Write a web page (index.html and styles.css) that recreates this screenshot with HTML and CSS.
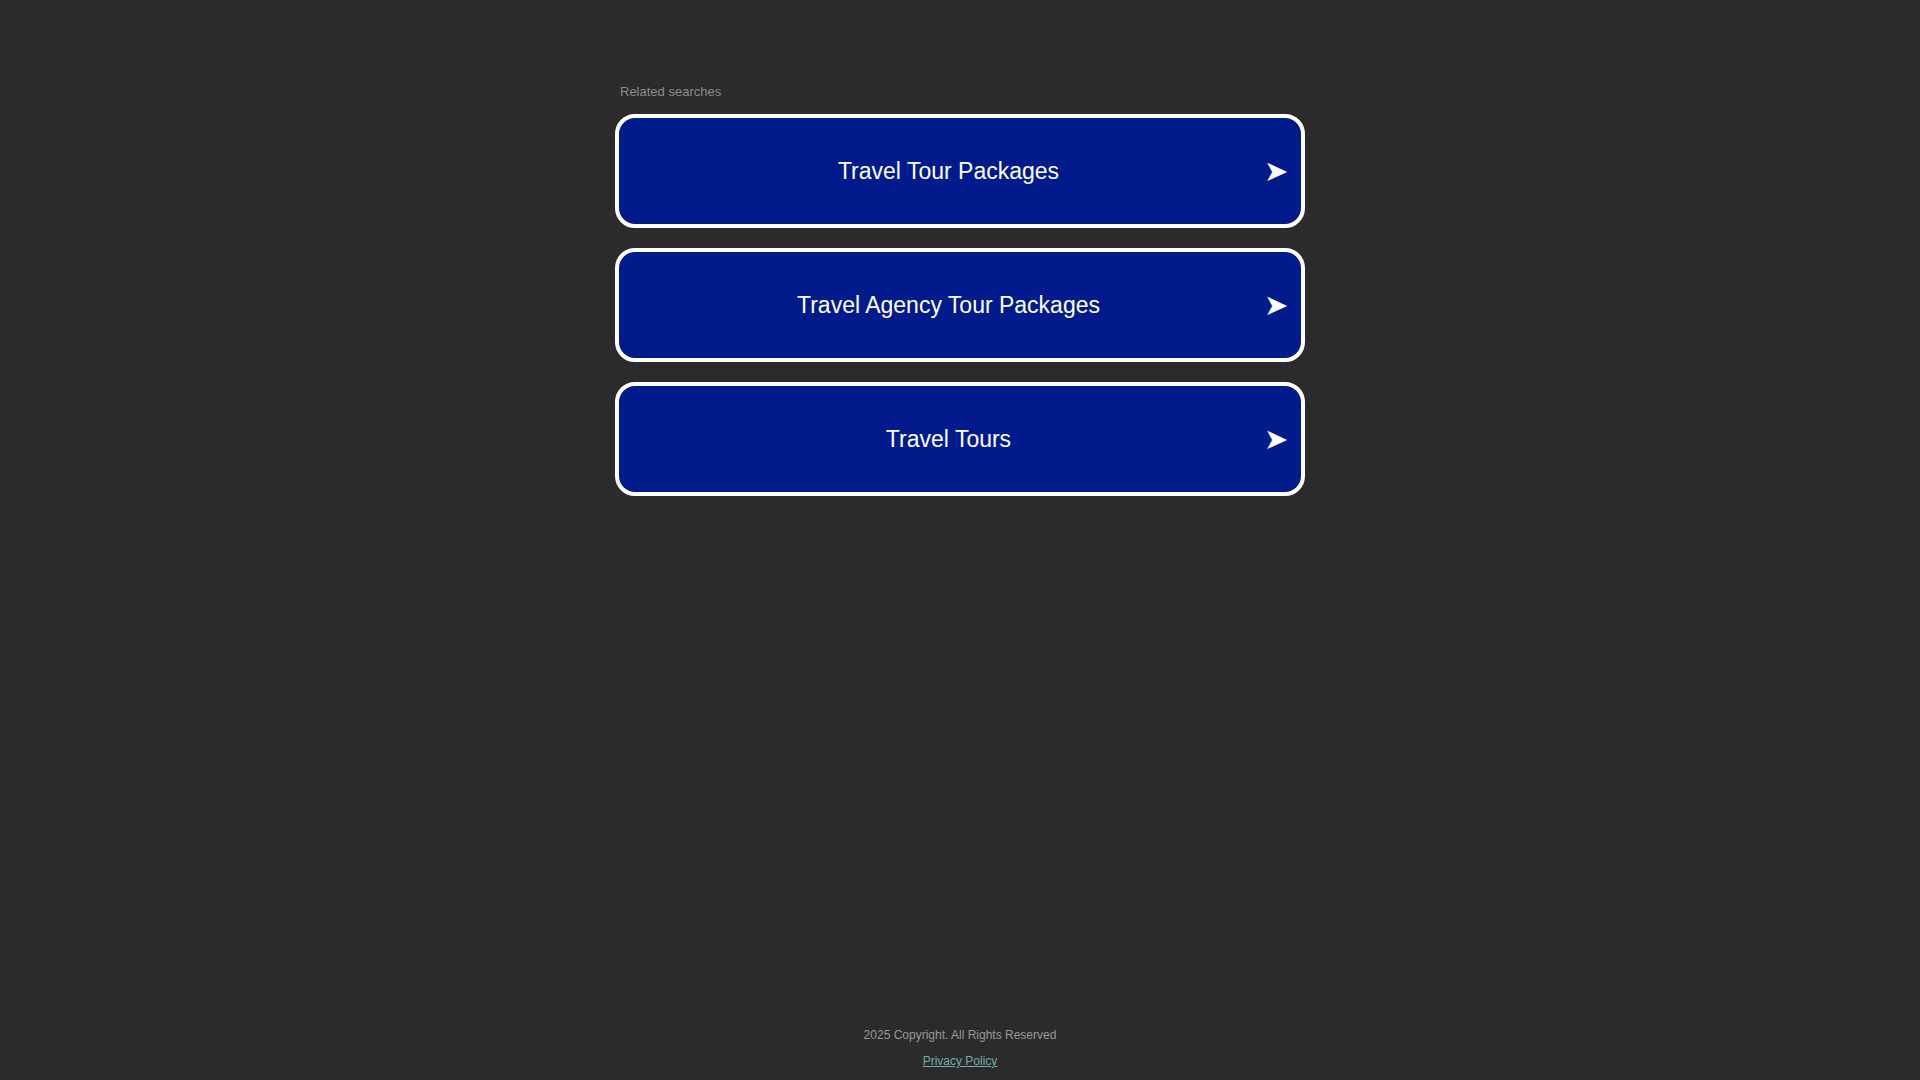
FILE: index.html
```html
<!DOCTYPE html>
<html lang="en">
<head>
<meta charset="utf-8">
<title>Related searches</title>
<link rel="stylesheet" href="styles.css">
</head>
<body>
<main class="content">
  <div class="heading">Related searches</div>
  <ul class="links">
    <li><a class="link" href="#"><span class="label">Travel Tour Packages</span><span class="arrow">➤</span></a></li>
    <li><a class="link" href="#"><span class="label">Travel Agency Tour Packages</span><span class="arrow">➤</span></a></li>
    <li><a class="link" href="#"><span class="label">Travel Tours</span><span class="arrow">➤</span></a></li>
  </ul>
</main>
<footer class="footer">
  <div class="copyright">2025 Copyright. All Rights Reserved</div>
  <a class="privacy" href="#">Privacy Policy</a>
</footer>
</body>
</html>
```
FILE: styles.css
```css
html, body {
  margin: 0;
  padding: 0;
}
body {
  background: #2b2b2b;
  font-family: "Liberation Sans", Arial, sans-serif;
  min-height: 100vh;
  display: flex;
  flex-direction: column;
}
.content {
  width: 690px;
  margin: 0 auto;
  padding-top: 84px;
}
.heading {
  font-size: 13px;
  line-height: 15px;
  color: #8c8c8c;
  padding-left: 5px;
  margin-bottom: 15px;
}
.links {
  list-style: none;
  margin: 0;
  padding: 0;
  display: flex;
  flex-direction: column;
  gap: 20px;
}
.link {
  box-sizing: border-box;
  height: 114px;
  display: flex;
  align-items: center;
  padding-left: 14px;
  background: #011b8c;
  border: 4px solid #ffffff;
  border-radius: 20px;
  color: #ffffff;
  text-decoration: none;
}
.label {
  flex: 1;
  text-align: center;
  font-size: 23px;
}
.arrow {
  width: 24px;
  margin-right: 13px;
  font-family: "DejaVu Sans", sans-serif;
  font-size: 29px;
  line-height: 1;
  text-align: center;
}
.footer {
  margin-top: auto;
  padding-bottom: 12px;
  display: flex;
  flex-direction: column;
  align-items: center;
  gap: 12px;
  font-size: 12px;
  line-height: 14px;
}
.copyright {
  color: #999999;
}
.privacy {
  color: #74abab;
  text-decoration: underline;
}
```
